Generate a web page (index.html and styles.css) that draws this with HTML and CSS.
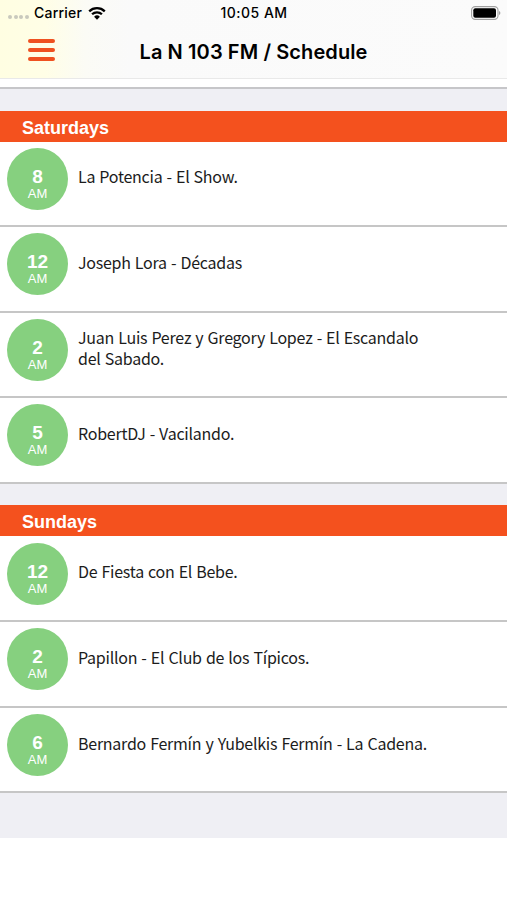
FILE: index.html
```html
<!DOCTYPE html>
<html lang="es">
<head>
    <meta charset="UTF-8">
    <meta name="viewport" content="width=device-width, initial-scale=1.0">
    <title>La N 103 FM / Schedule</title>
    <link rel="stylesheet" href="styles.css">
</head>
<body>
    <header class="header">
        <div class="status-bar">
            <div class="carrier">
                <span class="dots"><i></i><i></i><i></i><i></i></span>
                <span class="carrier-name">Carrier</span>
                <svg class="wifi" width="18" height="14" viewBox="0 0 18 14">
                    <path d="M1.2 5.3a11.2 11.2 0 0 1 15.6 0M4.1 8.3a7 7 0 0 1 9.8 0" fill="none" stroke="#000" stroke-width="2.3"/>
                    <path d="M9 13.8 6.1 10.8a4.1 4.1 0 0 1 5.8 0z"/>
                </svg>
            </div>
            <div class="clock">10:05 AM</div>
            <div class="battery">
                <svg width="30" height="14" viewBox="0 0 30 14">
                    <rect x=".6" y=".6" width="26.4" height="12.8" rx="3.6" fill="#fff" stroke="#a0a0a0" stroke-width="1.1"/>
                    <rect x="2.3" y="2.2" width="22.7" height="9.6" rx="2"/>
                    <path d="M28 5v4q1.4-.5 1.4-2T28 5z" fill="#a0a0a0"/>
                </svg>
            </div>
        </div>
        <div class="nav-bar">
            <div class="menu"><span></span><span></span><span></span></div>
            <h1>La N 103 FM / Schedule</h1>
        </div>
    </header>

    <main class="schedule">
        <section class="day">
            <h2>Saturdays</h2>
            <div class="show">
                <div class="time"><b>8</b><span>AM</span></div>
                <p>La Potencia - El Show.</p>
            </div>
            <div class="show">
                <div class="time"><b>12</b><span>AM</span></div>
                <p>Joseph Lora - Décadas</p>
            </div>
            <div class="show">
                <div class="time"><b>2</b><span>AM</span></div>
                <p>Juan Luis Perez y Gregory Lopez - El Escandalo del Sabado.</p>
            </div>
            <div class="show">
                <div class="time"><b>5</b><span>AM</span></div>
                <p>RobertDJ - Vacilando.</p>
            </div>
        </section>
        <section class="day">
            <h2>Sundays</h2>
            <div class="show">
                <div class="time"><b>12</b><span>AM</span></div>
                <p>De Fiesta con El Bebe.</p>
            </div>
            <div class="show">
                <div class="time"><b>2</b><span>AM</span></div>
                <p>Papillon - El Club de los Típicos.</p>
            </div>
            <div class="show">
                <div class="time"><b>6</b><span>AM</span></div>
                <p>Bernardo Fermín y Yubelkis Fermín - La Cadena.</p>
            </div>
        </section>
    </main>
</body>
</html>
```
FILE: styles.css
```css
* {
    box-sizing: border-box;
}
body {
    margin: 0;
    background-color: #fff;
    color: #000;
    font-family: 'Inter', sans-serif;
}
.header {
    height: 79px;
    border-bottom: 1px solid #e9e9e9;
    background: linear-gradient(to right, #fffee2 0, #fffee6 45px, #fbfbf5 85px, #fafafa 130px, #fbfbfb 100%);
}
.status-bar {
    display: grid;
    grid-template-columns: 1fr auto 1fr;
    align-items: center;
    height: 25px;
    padding: 0 6px 0 8px;
    font-size: 14px;
    font-weight: 500;
}
.carrier {
    display: flex;
    align-items: center;
}
.dots {
    display: flex;
    gap: 1.7px;
    margin: 8px 5px 0 0;
}
.dots i {
    width: 4px;
    height: 4px;
    border-radius: 50%;
    background-color: #c9c9bd;
}
.carrier-name {
    letter-spacing: 0.2px;
}
.clock {
    margin-left: -1px;
    letter-spacing: 0.5px;
}
.wifi {
    margin-left: 6px;
}
.battery {
    display: flex;
    justify-content: flex-end;
}
.nav-bar {
    display: grid;
    grid-template-columns: 1fr auto 1fr;
    align-items: center;
    height: 54px;
    padding: 0 28px;
}
.menu {
    display: flex;
    flex-direction: column;
    gap: 5.2px;
    width: 27px;
    margin-top: -4px;
}
.menu span {
    height: 4px;
    border-radius: 2px;
    background-color: #ef5120;
}
h1 {
    margin: 0;
    font-size: 20px;
    font-weight: 600;
    letter-spacing: 0.1px;
}
.schedule {
    height: 751px;
    margin-top: 8px;
    border-top: 2px solid #c6c6c9;
    background-color: #efeff4;
}
.day {
    padding-top: 21.5px;
}
h2 {
    height: 31px;
    margin: 0;
    padding: 1px 0 0 22px;
    background-color: #f4511e;
    color: #fff;
    font-family: 'Liberation Sans', sans-serif;
    font-size: 18px;
    line-height: 32px;
}
.show {
    display: flex;
    align-items: flex-start;
    height: 85.6px;
    padding: 6.2px 78px 0 7px;
    border-bottom: 2px solid #c6c6c6;
    background-color: #fff;
}
.time {
    display: flex;
    flex: none;
    flex-direction: column;
    align-items: center;
    width: 61px;
    height: 62px;
    padding-top: 19px;
    border-radius: 50%;
    background-color: #86d07f;
    color: #fff;
    font-family: 'Liberation Sans', sans-serif;
    font-size: 13px;
    line-height: 13px;
}
.time b {
    font-size: 19px;
    line-height: 20px;
}
.show p {
    display: flex;
    align-items: center;
    height: 62px;
    margin: -2px 0 0 10px;
    color: #1c1c1c;
    font-family: 'Noto Sans CJK JP', sans-serif;
    font-size: 16px;
    line-height: 20.5px;
    letter-spacing: -0.25px;
    word-spacing: 0.8px;
}
```
